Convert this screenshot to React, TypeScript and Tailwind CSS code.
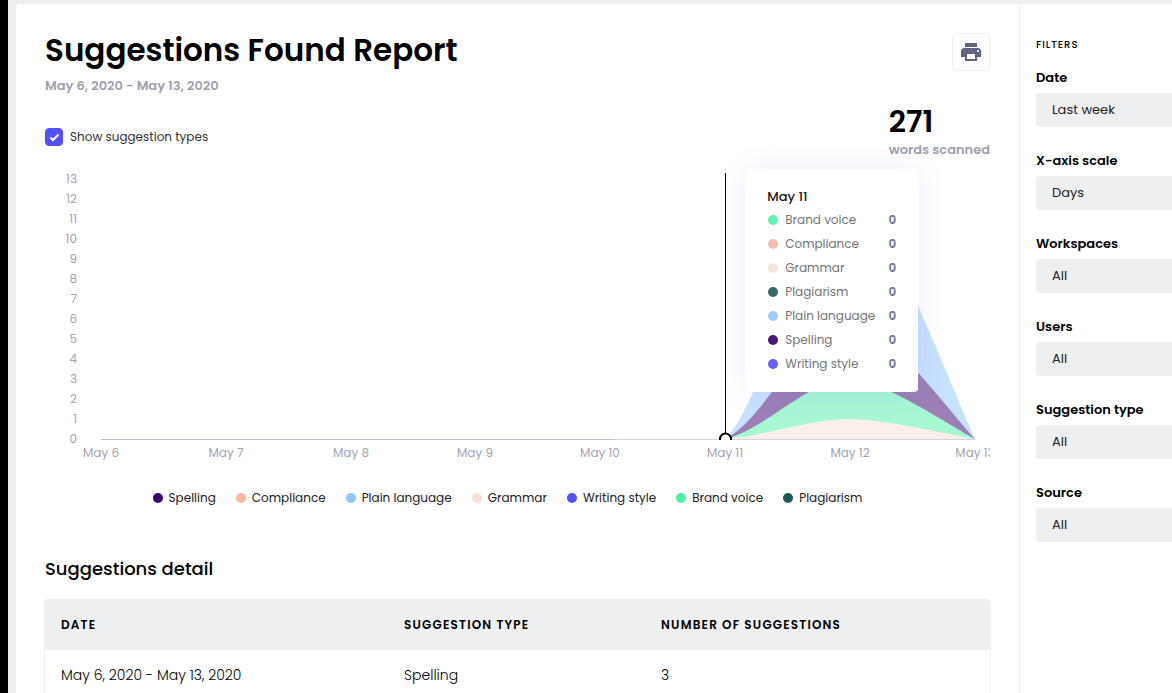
import { useState } from "react";
import { MdPrint } from "react-icons/md";

const legend = [
  { name: "Spelling", dot: "bg-[#35006b]" },
  { name: "Compliance", dot: "bg-[#f8b9a4]" },
  { name: "Plain language", dot: "bg-[#90c8ff]" },
  { name: "Grammar", dot: "bg-[#f8e0da]" },
  { name: "Writing style", dot: "bg-[#5451fb]" },
  { name: "Brand voice", dot: "bg-[#4ff0a6]" },
  { name: "Plagiarism", dot: "bg-[#1b5a57]" },
];

const tooltipRows = [
  { name: "Brand voice", value: 0, dot: "bg-[#60f2ae]" },
  { name: "Compliance", value: 0, dot: "bg-[#f8bfac]" },
  { name: "Grammar", value: 0, dot: "bg-[#f9e3de]" },
  { name: "Plagiarism", value: 0, dot: "bg-[#326b68]" },
  { name: "Plain language", value: 0, dot: "bg-[#9bcdff]" },
  { name: "Spelling", value: 0, dot: "bg-[#491979]" },
  { name: "Writing style", value: 0, dot: "bg-[#6562fb]" },
];

const filters = [
  { id: "date", label: "Date", value: "Last week" },
  { id: "scale", label: "X-axis scale", value: "Days" },
  { id: "workspaces", label: "Workspaces", value: "All" },
  { id: "users", label: "Users", value: "All" },
  { id: "type", label: "Suggestion type", value: "All" },
  { id: "source", label: "Source", value: "All" },
];

const days = ["May 6", "May 7", "May 8", "May 9", "May 10", "May 11", "May 12", "May 13"];
const ticks = [13, 12, 11, 10, 9, 8, 7, 6, 5, 4, 3, 2, 1, 0];

// Stacked totals on May 12, drawn from the tallest to the shortest.
const layers = [
  { total: 12, fill: "#c8e1ff" },
  { total: 6, fill: "#9b7fb5" },
  { total: 3, fill: "#a7f7d3" },
  { total: 1, fill: "#fbefeb" },
];

const BASE = 279;
const UNIT = 20;
const dayX = (i: number) => Math.round(56 + i * 124.8);

function areaPath(total: number) {
  const h = total * UNIT;
  const [a, b, c] = [dayX(5), dayX(6), dayX(7)];
  return `M${a} ${BASE} C${a + 42} ${BASE - h * 0.167} ${b - 42} ${BASE - h} ${b} ${BASE - h} C${b + 30} ${BASE - h} ${c - 30} ${BASE - h * 0.28} ${c} ${BASE} Z`;
}

function Chart() {
  return (
    <div className="relative">
      <svg viewBox="0 0 945 304" className="block w-full" role="img" aria-label="Suggestions per day">
        <g fill="#a3a3b3" fontSize="12">
          {ticks.map((t) => (
            <text key={t} x="32" y={BASE - t * UNIT + 4} textAnchor="end">
              {t}
            </text>
          ))}
          {days.map((d, i) => (
            <text key={d} x={dayX(i)} y="297" textAnchor="middle">
              {d}
            </text>
          ))}
        </g>
        {layers.map((l) => (
          <path key={l.total} d={areaPath(l.total)} fill={l.fill} />
        ))}
        <path d="M56 279.5H570" stroke="#b4bfd3" />
        <path d="M570 279.5H930" stroke="#d3d2e0" />
        <path d="M680.5 13V274" stroke="#000" />
        <path d="M675 280V279a5.5 5.5 0 0 1 11 0V280" fill="#fff" stroke="#000" strokeWidth="2" />
      </svg>
      <div className="absolute top-[9px] left-[74.2%] w-[172px] rounded bg-white pt-[18px] pr-[22px] pb-4 pl-[21px] text-xs shadow-[0_0_30px_rgba(84,81,251,0.1)]">
        <p className="text-[13px] leading-5 font-medium text-[#191919]">May 11</p>
        <ul className="pt-px">
          {tooltipRows.map((r) => (
            <li key={r.name} className="flex items-center leading-6 text-[#757575]">
              <span className={`mr-[7px] ml-px size-[10px] rounded-full ${r.dot}`} />
              <span className="whitespace-nowrap">{r.name}</span>
              <span className="ml-auto font-semibold text-[#70768c]">{r.value}</span>
            </li>
          ))}
        </ul>
      </div>
    </div>
  );
}

export default function App() {
  const [showTypes, setShowTypes] = useState(true);
  return (
    <div className="min-h-screen border-l-8 border-black bg-[#eeeff1] pt-1 pl-2 font-['Poppins','Inter',sans-serif] text-black">
      <div className="flex min-h-screen rounded-tl bg-white">
        <main className="min-w-0 flex-1 px-[29px] pt-7 pb-8">
          <header className="flex items-start justify-between">
            <div>
              <h1 className="text-[31px] leading-9 font-semibold">Suggestions Found Report</h1>
              <p className="mt-2 text-[13px] leading-5 font-semibold text-[#a09fae]">May 6, 2020 - May 13, 2020</p>
            </div>
            <button
              type="button"
              aria-label="Print"
              className="mt-px flex size-[38px] items-center justify-center rounded border border-[#eeeff1] text-[#5f6580]"
            >
              <MdPrint size={24} />
            </button>
          </header>

          <div className="mt-2 flex items-start justify-between">
            <label className="mt-6 flex items-center gap-[7px] text-xs leading-[18px] text-[#333]">
              <span className="grid">
                <input
                  type="checkbox"
                  checked={showTypes}
                  onChange={(e) => setShowTypes(e.target.checked)}
                  className="peer col-start-1 row-start-1 size-[18px] appearance-none rounded border border-[#5451fb] checked:bg-[#5451fb]"
                />
                <svg
                  viewBox="0 0 18 18"
                  className="pointer-events-none invisible col-start-1 row-start-1 size-[18px] peer-checked:visible"
                  fill="none"
                  stroke="#fff"
                  strokeWidth="2"
                >
                  <path d="M5.5 9.5 8 12l5.500-5.500" />
                </svg>
              </span>
              Show suggestion types
            </label>
            <div>
              <p className="text-[30px] leading-9 font-semibold">271</p>
              <p className="text-[13px] leading-5 font-semibold text-[#a09fae]">words scanned</p>
            </div>
          </div>

          <Chart />

          <ul className="mt-6 flex flex-wrap justify-center text-xs leading-5 text-[#222]">
            {legend.map((l) => (
              <li key={l.name} className="mr-5 flex items-center gap-[6px]">
                <span className={`size-[10px] rounded-full ${l.dot}`} />
                {l.name}
              </li>
            ))}
          </ul>

          <h2 className="mt-[47px] text-lg leading-7 font-medium">Suggestions detail</h2>
          <div className="-mx-px mt-4 overflow-hidden rounded border border-[#eeeff1]">
            <table className="w-full table-fixed text-left">
              <thead className="bg-[#eeeff1] text-xs tracking-widest uppercase">
                <tr className="h-[50px]">
                  <th className="w-[36.3%] px-4 font-semibold">Date</th>
                  <th className="w-[27.2%] px-4 font-semibold">Suggestion type</th>
                  <th className="px-4 font-semibold">Number of suggestions</th>
                </tr>
              </thead>
              <tbody className="text-sm font-light">
                <tr className="h-[50px]">
                  <td className="px-4">May 6, 2020 - May 13, 2020</td>
                  <td className="px-4">Spelling</td>
                  <td className="px-4">3</td>
                </tr>
              </tbody>
            </table>
          </div>
        </main>

        <aside className="w-[153px] shrink-0 border-l border-[#eeeff1] pt-[33px] pl-4">
          <h2 className="text-[10px] leading-4 font-medium tracking-widest">FILTERS</h2>
          <div className="mt-[15px] flex flex-col gap-[23px]">
            {filters.map((f) => (
              <div key={f.id} className="flex flex-col gap-[5px]">
                <label htmlFor={f.id} className="text-[13px] leading-5 font-semibold">
                  {f.label}
                </label>
                <div className="pb-px">
                  <select
                    id={f.id}
                    defaultValue={f.value}
                    className="block h-[34px] w-full appearance-none rounded-l bg-[#eeeff1] px-4 text-[13px] text-[#222]"
                  >
                    <option>{f.value}</option>
                  </select>
                </div>
              </div>
            ))}
          </div>
        </aside>
      </div>
    </div>
  );
}
